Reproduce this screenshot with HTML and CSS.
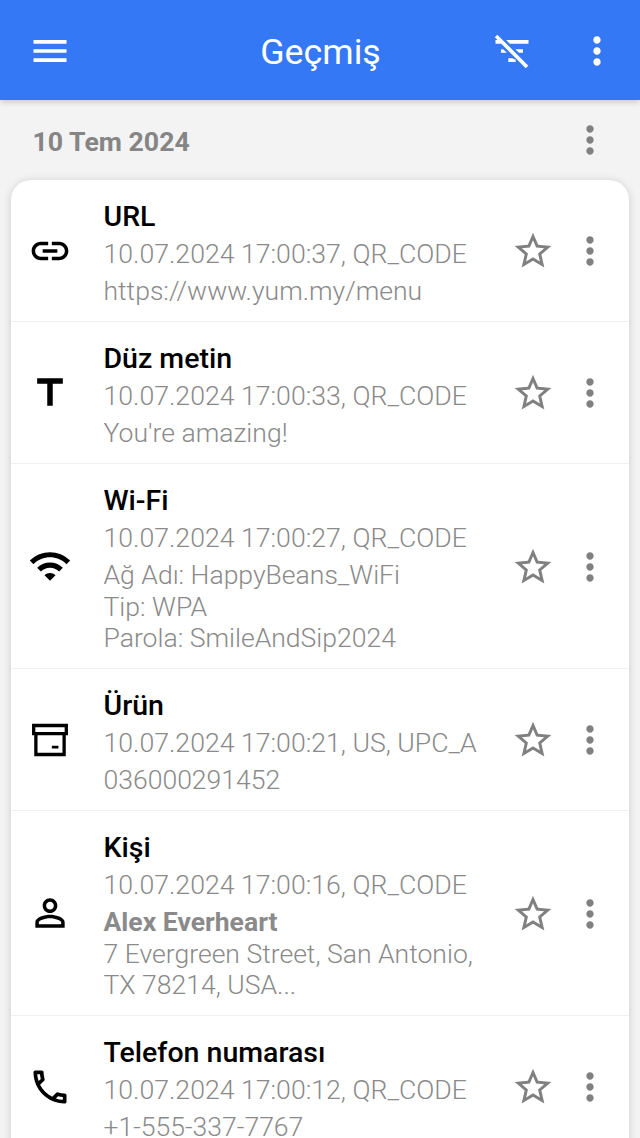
FILE: index.html
```html
<!DOCTYPE html>
<html lang="tr">
<head>
    <meta charset="UTF-8">
    <meta name="viewport" content="width=device-width, initial-scale=1.0">
    <title>Geçmiş</title>
    <link rel="stylesheet" href="styles.css">
</head>
<body>
    <svg class="icon-defs" width="0" height="0">
        <symbol id="i-more" viewBox="0 0 24 24"><path d="M12 8c1.1 0 2-.9 2-2s-.9-2-2-2-2 .9-2 2 .9 2 2 2zm0 2c-1.1 0-2 .9-2 2s.9 2 2 2 2-.9 2-2-.9-2-2-2zm0 6c-1.1 0-2 .9-2 2s.9 2 2 2 2-.9 2-2-.9-2-2-2z"/></symbol>
        <symbol id="i-star" viewBox="0 0 24 24"><path d="M22 9.24l-7.19-.62L12 2 9.19 8.63 2 9.24l5.46 4.73L5.82 21 12 17.27 18.18 21l-1.63-7.03L22 9.24zM12 15.4l-3.76 2.27 1-4.28-3.32-2.88 4.38-.38L12 6.1l1.71 4.04 4.38.38-3.32 2.88 1 4.28L12 15.4z"/></symbol>
    </svg>

    <header class="toolbar">
        <button class="tool-btn">
            <svg class="icon" viewBox="0 0 24 24"><path d="M3 18h18v-2H3v2zm0-5h18v-2H3v2zm0-7v2h18V6H3z"/></svg>
        </button>
        <h1 class="toolbar-title">Geçmiş</h1>
        <button class="tool-btn">
            <!-- filter lines, cut by the slash -->
            <svg class="icon" viewBox="0 0 24 24"><path d="M10.8 8H21V6H8.8zM15.8 13H18v-2h-4.2zM9.2 13H6v-2h1.2zM10 18h4v-1.2L12.2 16H10zM3 6h1.1l2 2H3zM2.6 4.5L4 3.1 20.9 20l-1.4 1.4z"/></svg>
        </button>
        <button class="tool-btn">
            <svg class="icon" viewBox="0 0 24 24"><use href="#i-more"/></svg>
        </button>
    </header>

    <div class="date-row">
        <span class="date-label">10 Tem 2024</span>
        <svg class="icon icon-grey" viewBox="0 0 24 24"><use href="#i-more"/></svg>
    </div>

    <main class="card">
        <div class="row">
            <svg class="icon row-type" viewBox="0 0 24 24"><path d="M3.9 12c0-1.71 1.39-3.1 3.1-3.1h4V7H7c-2.76 0-5 2.24-5 5s2.24 5 5 5h4v-1.9H7c-1.71 0-3.1-1.39-3.1-3.1zM8 13h8v-2H8v2zm9-6h-4v1.9h4c1.71 0 3.1 1.39 3.1 3.1s-1.39 3.1-3.1 3.1h-4V17h4c2.76 0 5-2.24 5-5s-2.24-5-5-5z"/></svg>
            <div class="row-text">
                <div class="row-title">URL</div>
                <div class="row-meta">10.07.2024 17:00:37, QR_CODE</div>
                <div class="row-body">https://www.yum.my/menu</div>
            </div>
            <div class="row-actions">
                <svg class="icon icon-grey" viewBox="0 0 24 24"><use href="#i-star"/></svg>
                <svg class="icon icon-grey" viewBox="0 0 24 24"><use href="#i-more"/></svg>
            </div>
        </div>

        <div class="row">
            <svg class="icon row-type" viewBox="0 0 24 24"><path d="M5 4v3h5.5v12h3V7H19V4z"/></svg>
            <div class="row-text">
                <div class="row-title">Düz metin</div>
                <div class="row-meta">10.07.2024 17:00:33, QR_CODE</div>
                <div class="row-body">You're amazing!</div>
            </div>
            <div class="row-actions">
                <svg class="icon icon-grey" viewBox="0 0 24 24"><use href="#i-star"/></svg>
                <svg class="icon icon-grey" viewBox="0 0 24 24"><use href="#i-more"/></svg>
            </div>
        </div>

        <div class="row">
            <svg class="icon row-type" viewBox="0 0 24 24"><path d="M1 9l2 2c4.97-4.97 13.03-4.97 18 0l2-2C16.93 2.93 7.08 2.93 1 9zm8 8l3 3 3-3c-1.65-1.66-4.34-1.66-6 0zm-4-4l2 2c2.76-2.76 7.24-2.76 10 0l2-2C15.14 9.14 8.87 9.14 5 13z"/></svg>
            <div class="row-text">
                <div class="row-title">Wi-Fi</div>
                <div class="row-meta">10.07.2024 17:00:27, QR_CODE</div>
                <div class="row-body">Ağ Adı: HappyBeans_WiFi<br>Tip: WPA<br>Parola: SmileAndSip2024</div>
            </div>
            <div class="row-actions">
                <svg class="icon icon-grey" viewBox="0 0 24 24"><use href="#i-star"/></svg>
                <svg class="icon icon-grey" viewBox="0 0 24 24"><use href="#i-more"/></svg>
            </div>
        </div>

        <div class="row">
            <svg class="icon row-type" viewBox="0 0 24 24"><path fill-rule="evenodd" d="M2.2 3.2h19.6v6.2h-1.2v11.4H3.4V9.4H2.2zM4 5v2.6h16V5zM5.2 9.4V19h13.6V9.4zM13 15.1h3.6v1.5H13z"/></svg>
            <div class="row-text">
                <div class="row-title">Ürün</div>
                <div class="row-meta">10.07.2024 17:00:21, US, UPC_A</div>
                <div class="row-body">036000291452</div>
            </div>
            <div class="row-actions">
                <svg class="icon icon-grey" viewBox="0 0 24 24"><use href="#i-star"/></svg>
                <svg class="icon icon-grey" viewBox="0 0 24 24"><use href="#i-more"/></svg>
            </div>
        </div>

        <div class="row">
            <svg class="icon row-type" viewBox="0 0 24 24"><path d="M12 5.9c1.16 0 2.1.94 2.1 2.1s-.94 2.1-2.1 2.1S9.9 9.16 9.9 8s.94-2.1 2.1-2.1m0 9c2.97 0 6.1 1.46 6.1 2.1v1.1H5.9V17c0-.64 3.13-2.1 6.1-2.1M12 4C9.79 4 8 5.79 8 8s1.79 4 4 4 4-1.79 4-4-1.79-4-4-4zm0 9c-2.67 0-8 1.34-8 4v3h16v-3c0-2.66-5.33-4-8-4z"/></svg>
            <div class="row-text">
                <div class="row-title">Kişi</div>
                <div class="row-meta">10.07.2024 17:00:16, QR_CODE</div>
                <div class="row-body"><strong>Alex Everheart</strong><br>7 Evergreen Street, San Antonio,<br>TX 78214, USA...</div>
            </div>
            <div class="row-actions">
                <svg class="icon icon-grey" viewBox="0 0 24 24"><use href="#i-star"/></svg>
                <svg class="icon icon-grey" viewBox="0 0 24 24"><use href="#i-more"/></svg>
            </div>
        </div>

        <div class="row">
            <svg class="icon row-type" viewBox="0 0 24 24"><path d="M6.54 5c.06.89.21 1.76.45 2.59l-1.2 1.2c-.41-1.2-.67-2.47-.76-3.79h1.51m9.86 12.02c.85.24 1.72.39 2.6.45v1.49c-1.32-.09-2.59-.35-3.8-.75l1.2-1.19M7.5 3H4c-.55 0-1 .45-1 1 0 9.39 7.61 17 17 17 .55 0 1-.45 1-1v-3.49c0-.55-.45-1-1-1-1.24 0-2.45-.2-3.57-.57-.1-.04-.21-.05-.31-.05-.26 0-.51.1-.71.29l-2.2 2.2c-2.83-1.45-5.15-3.76-6.59-6.59l2.2-2.2c.28-.28.36-.67.25-1.02C8.7 6.45 8.5 5.25 8.5 4c0-.55-.45-1-1-1z"/></svg>
            <div class="row-text">
                <div class="row-title">Telefon numarası</div>
                <div class="row-meta">10.07.2024 17:00:12, QR_CODE</div>
                <div class="row-body">+1-555-337-7767</div>
            </div>
            <div class="row-actions">
                <svg class="icon icon-grey" viewBox="0 0 24 24"><use href="#i-star"/></svg>
                <svg class="icon icon-grey" viewBox="0 0 24 24"><use href="#i-more"/></svg>
            </div>
        </div>
    </main>
</body>
</html>
```
FILE: styles.css
```css
html, body {
    height: 100%;
}
body {
    font-family: Roboto, "Liberation Sans", sans-serif;
    margin: 0;
    height: 1138px;
    overflow: hidden;
    background-color: #f3f3f3;
}
.icon-defs {
    position: absolute;
}
.icon {
    display: block;
    width: 44px;
    height: 44px;
    flex: none;
    fill: currentColor;
}
.icon-grey {
    color: #808080;
}

.toolbar {
    position: relative;
    height: 100px;
    display: flex;
    align-items: center;
    padding: 2px 21px 0 28px;
    box-sizing: border-box;
    background-color: #3578f6;
    color: white;
    box-shadow: 0 2px 6px rgba(0, 0, 0, 0.18);
}
.tool-btn {
    padding: 0;
    border: none;
    background: none;
    color: inherit;
}
.tool-btn:nth-of-type(2) {
    margin-right: 41px;
}
.toolbar-title {
    flex: 1;
    margin: 0;
    padding-left: 79px;
    padding-top: 1px;
    text-align: center;
    font-size: 35.8px;
    font-weight: 400;
}

.date-row {
    height: 80px;
    display: flex;
    align-items: center;
    justify-content: space-between;
    padding: 0 28px 0 32.5px;
    box-sizing: border-box;
}
.date-label {
    font-size: 26.7px;
    font-weight: 700;
    color: #858585;
    margin-top: 4px;
}

.card {
    margin: 0 11px;
    background-color: white;
    border-radius: 20px;
    box-shadow: 0 1px 8px rgba(0, 0, 0, 0.16);
}
.row {
    display: flex;
    align-items: center;
    padding: 13.5px 17px;
    border-bottom: 1px solid #f0f0f0;
}
.row:last-child {
    border-bottom: none;
}
.row-type {
    color: black;
    margin-right: 31.5px;
}
.row-text {
    flex: 1;
    min-width: 0;
    padding: 5.5px 0 1px;
}
.row-title {
    font-size: 28.5px;
    line-height: 36px;
    font-weight: 500;
    color: black;
}
.row-meta {
    font-size: 26.65px;
    line-height: 38px;
    font-weight: 300;
    color: #8a8a8a;
    white-space: nowrap;
}
.row-body {
    font-size: 26.55px;
    line-height: 31.5px;
    font-weight: 300;
    color: #8a8a8a;
    margin-top: 2px;
}
.row-body strong {
    font-weight: 700;
}
.row-actions {
    display: flex;
    align-items: center;
    gap: 13px;
    padding-top: 1px;
}
```
